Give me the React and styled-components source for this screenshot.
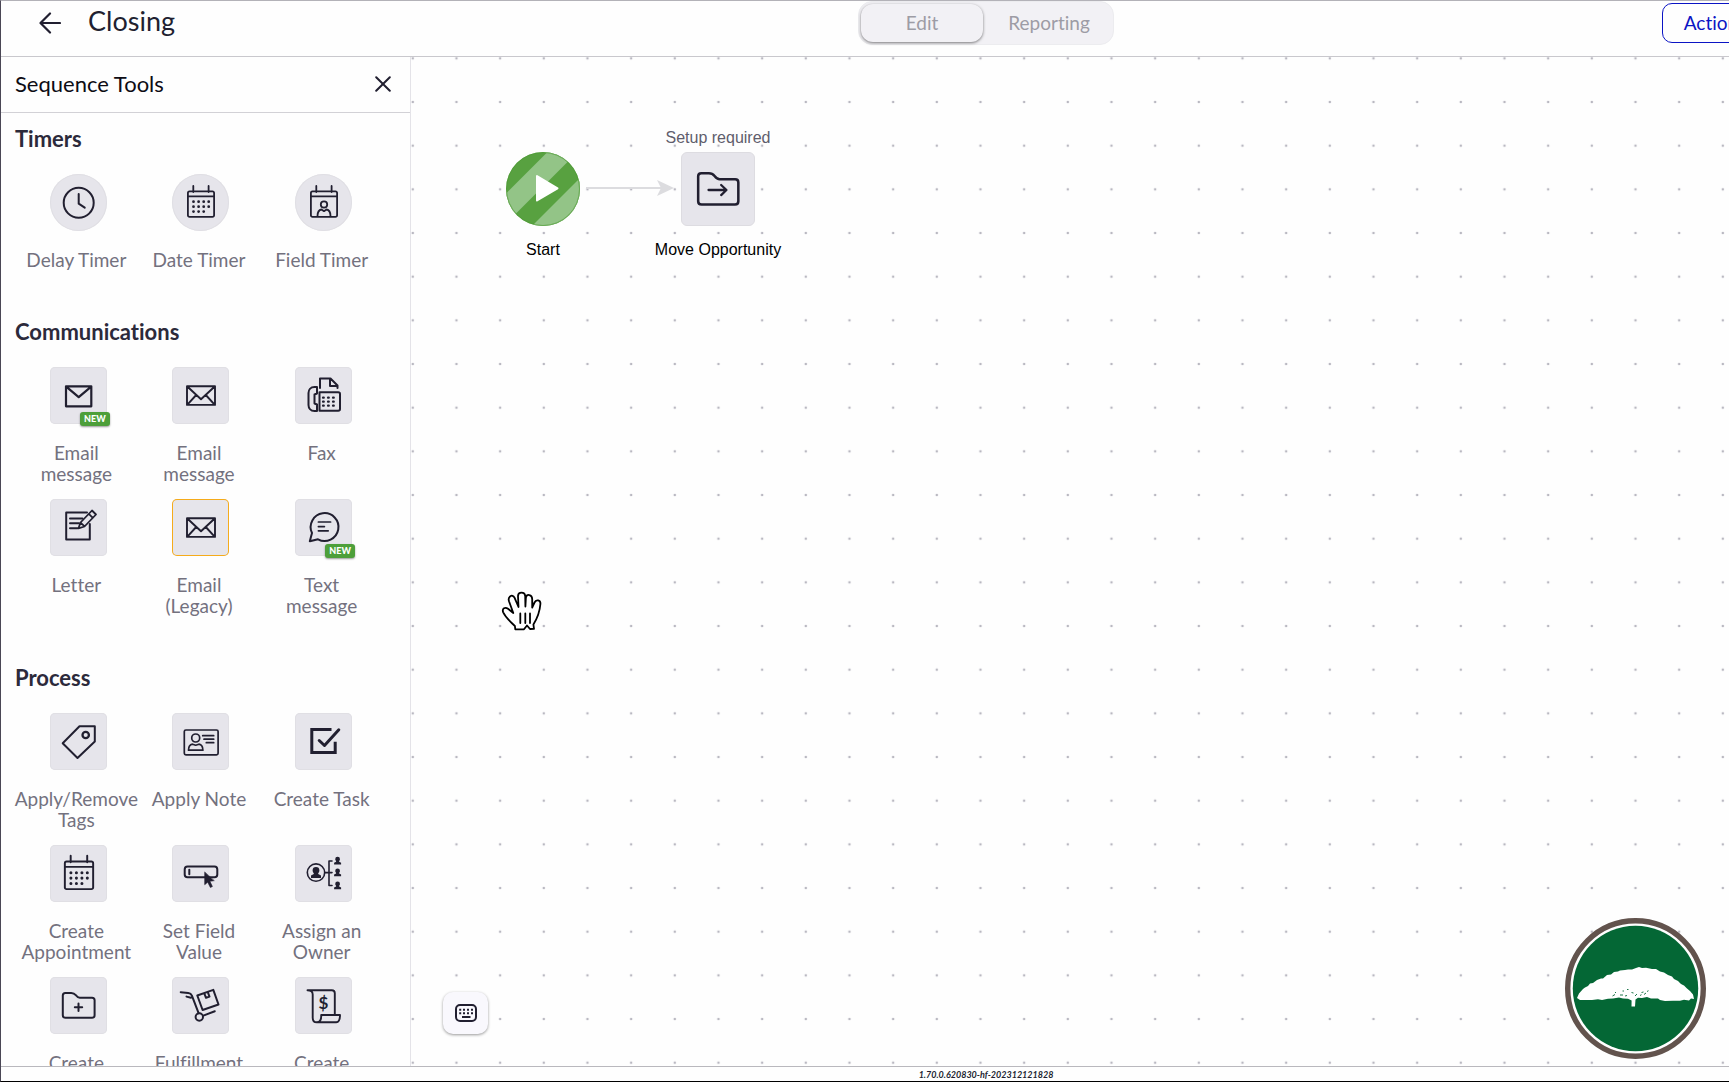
import React from "react";
import styled, { createGlobalStyle } from "styled-components";

const INK = "#211f30";

/* ---------- icons ---------- */

const Icon = ({ children, width = 2 }) => (
  <svg
    viewBox="0 0 57 57"
    width="100%"
    height="100%"
    fill="none"
    stroke={INK}
    strokeWidth={width}
    strokeLinecap="round"
    strokeLinejoin="round"
    aria-hidden="true"
  >
    {children}
  </svg>
);

const ClockIcon = () => (
  <Icon>
    <circle cx="28.7" cy="28.8" r="15" />
    <path d="M28.7 20v9.7l6 4" />
  </Icon>
);

const CalendarFrame = () => (
  <path d="M17.5 17.3h23a1.6 1.6 0 0 1 1.6 1.6v22.4a1.6 1.6 0 0 1-1.6 1.6h-23a1.6 1.6 0 0 1-1.6-1.6V18.9a1.6 1.6 0 0 1 1.6-1.6zM16 22.3h26M21.3 12v6M36.6 12v6" />
);

const CalendarIcon = ({ scale = 1 }) => (
  <Icon width={1.8}>
    <g transform={`translate(29 27.5) scale(${scale}) translate(-29 -27.5)`}>
      <CalendarFrame />
      <path
        strokeWidth="2.8"
        d="M21.5 27.7h.01M26.6 27.7h.01M31.7 27.7h.01M36.7 27.7h.01M21.5 32.7h.01M26.6 32.7h.01M31.7 32.7h.01M36.7 32.7h.01M21.5 37.6h.01M26.6 37.6h.01M31.7 37.6h.01"
      />
    </g>
  </Icon>
);

const FieldTimerIcon = () => (
  <Icon width={1.8}>
    <CalendarFrame />
    <circle cx="29" cy="30.5" r="3.2" />
    <path d="M22.5 42c0-3.6 1.6-6 4-6.5l2.5 1.7 2.5-1.7c2.4.5 4 2.9 4 6.5" />
  </Icon>
);

const MailIcon = () => (
  <Icon width={2.2}>
    <path d="M16 19.3h25.3v20H16zM16.5 19.8l12.2 10.4 12.2-10.4" />
  </Icon>
);

const EnvelopeIcon = () => (
  <Icon width={1.9}>
    <path d="M15 19.3h28v18.6H15zM15.3 19.5L29 32.3l13.7-12.8M15.4 37.6l8.8-9.6M42.6 37.6l-8.8-9.6" />
  </Icon>
);

const FaxIcon = () => (
  <Icon width={2}>
    <path d="M22 20h-2.5c-4 0-6 3-6 6v12c0 3 2 6 6 6H22v-6.5l-2.5-1v-9l2.5-1zM25 21V11.5h10.5l7 7V21M35 12v7h7M24.5 43.8V25.3h18.8c1 0 1.7.7 1.7 1.7v15c0 1-.8 1.8-1.8 1.8z" />
    <path
      strokeWidth="2.2"
      d="M28 30.7h.8M33 30.7h.8M38 30.7h.8M28 34.7h.8M33 34.7h.8M38 34.7h.8M28 38.7h.8M33 38.7h.8M38 38.7h.8"
    />
  </Icon>
);

const LetterIcon = () => (
  <Icon>
    <path d="M37 13.6H16.2v26.8h23.6V25" />
    <path d="M20 19.6h12.5M20 24.3h9M20 29.3h7.5" />
    <path strokeWidth="1.8" d="M28.5 29.3l2-5.8 11.5-12 4 4-11.5 12zM38.8 14.8l4 4M30.8 23.8l3.5 3.4" />
  </Icon>
);

const ChatIcon = () => (
  <Icon>
    <path d="M14.8 42.3l2.2-8.3a13.9 13.9 0 1 1 6 6.3z" />
    <path strokeWidth="1.7" d="M23.4 23h12.2M23.4 27.6h6M23.4 31.8h9.8" />
  </Icon>
);

const TagIcon = () => (
  <Icon>
    <path d="M29.5 13.3h15.3v15.3L27.5 45 12.7 30.3z" />
    <circle cx="35.7" cy="22" r="3.2" strokeWidth="2.3" />
  </Icon>
);

const NoteIcon = () => (
  <Icon width={1.7}>
    <rect x="12.3" y="17" width="33.8" height="24.8" rx="1.6" />
    <circle cx="23.7" cy="25" r="4" />
    <path d="M16.5 37.2c0-3.4 1.5-5.5 4-6l3.2 1 3.2-1c2.5.5 4 2.6 4 6zM30.7 22.7h11M32 26.2h9.7M34.3 29.7h7.4" />
  </Icon>
);

const TaskIcon = () => (
  <Icon width={3}>
    <path strokeLinejoin="miter" strokeLinecap="butt" d="M36.5 16.5H16.8v23h23.4V28.7" />
    <path d="M24.2 27.5l5.3 5 14.3-15.7" />
  </Icon>
);

const SetFieldIcon = () => (
  <Icon>
    <rect x="12.7" y="21.6" width="32.6" height="10.6" rx="2.8" />
    <path d="M17.3 24.7v4.6" />
    <path fill={INK} strokeWidth=".6" d="M32.7 27.3v12.4l3-2.5 2.7 5.3 2-1-2.5-5.2 4-.6z" />
  </Icon>
);

const Bust = ({ x, y, s }) => (
  <path
    transform={`translate(${x} ${y}) scale(${s})`}
    fill={INK}
    stroke="none"
    d="M0-5.5a3.4 3.4 0 0 1 3.4 3.4c0 1.2-.6 2-1.2 2.7v.9L5 3v2.5H-5V3l2.8-1.5V.6c-.6-.7-1.2-1.5-1.2-2.7A3.4 3.4 0 0 1 0-5.5z"
  />
);

const AssignIcon = () => (
  <Icon width={1.6}>
    <circle cx="21" cy="27.6" r="8.7" />
    <Bust x={21} y={27.6} s={1} />
    <path d="M29.7 27.6h7.3M37 16h-3v24.5h3" />
    <Bust x={42.6} y={15.6} s={0.7} />
    <Bust x={42.6} y={27.4} s={0.7} />
    <Bust x={42.6} y={40.4} s={0.7} />
  </Icon>
);

const FolderShape = () => (
  <path d="M12.8 18.5c0-1.5 1-2.5 2.5-2.5h6c2.6 0 3.3.7 4.5 2.2 1.3 1.7 2 2.6 4 2.6h12.3c1.5 0 2.5 1 2.5 2.5v14.9c0 1.7-.9 2.6-2.6 2.6H15.5c-1.8 0-2.7-.9-2.7-2.6z" />
);

const FolderPlusIcon = () => (
  <Icon>
    <FolderShape />
    <path d="M28.5 26.6v7.4M24.8 30.3h7.4" />
  </Icon>
);

const FolderArrowIcon = () => (
  <Icon>
    <FolderShape />
    <path strokeWidth="1.8" d="M21 29.3h14M31 25.3l4.2 4-4.2 4" />
  </Icon>
);

const DollyIcon = () => (
  <Icon>
    <path d="M8.7 15.2l7.5.8c1.8.2 3 .9 3.7 2.6l6.7 17.5M14.5 19.6l4.5 1.2M31.3 38.6l11.5-4.4" />
    <circle cx="27.3" cy="40" r="3.7" />
    <path d="M25.3 18.5l16-5.6 5.2 14.6-15.9 5.5zM32.3 16.3l1.7 4.5 3.5-1.2-1.7-4.5" />
  </Icon>
);

const OrderIcon = () => (
  <Icon width={1.9}>
    <path d="M12.5 13.3h24.3c2 0 3 1.1 3 3v21.5M12.5 13.3c3.7 0 5.2 1.2 5.2 4.2v23.2c0 3 1.5 4.6 4 4.6h19.6c2.2 0 3.7-2.5 3.7-7.3H26.2c.2 4.2-1 7.3-4.3 7.3" />
    <text
      x="28.5"
      y="31.5"
      textAnchor="middle"
      fontFamily="Lato, sans-serif"
      fontSize="17"
      fontWeight="700"
      fill={INK}
      stroke="none"
    >
      $
    </text>
  </Icon>
);

const BackIcon = () => (
  <svg width="22" height="22" viewBox="0 0 22 22" fill="none" stroke={INK} strokeWidth="2.2" aria-hidden="true">
    <path strokeLinecap="round" strokeLinejoin="round" d="M11 1.5L1.5 11l9.5 9.5M2 11h19" />
  </svg>
);

const CloseIcon = () => (
  <svg width="16" height="16" viewBox="0 0 16 16" fill="none" stroke={INK} strokeWidth="2" aria-hidden="true">
    <path strokeLinecap="round" d="M1.2 1.2l13.6 13.6M14.8 1.2L1.2 14.8" />
  </svg>
);

const KeyboardIcon = () => (
  <svg width="22" height="18" viewBox="0 0 22 18" fill="none" stroke={INK} strokeWidth="2" aria-hidden="true">
    <rect x="1" y="1" width="20" height="16" rx="4" />
    <path d="M4.2 5.7h2M8 5.7h2M12 5.7h2M16 5.7h2M4.2 9.2h2M8 9.2h2M12 9.2h2M16 9.2h2M7 13h8.5" />
  </svg>
);

const StartIcon = () => (
  <svg width="74" height="74" viewBox="0 0 74 74" aria-hidden="true">
    <clipPath id="startDisc">
      <circle cx="37" cy="37" r="37" />
    </clipPath>
    <g clipPath="url(#startDisc)">
      <path fill="#58a140" d="M0 0h74v74H0z" />
      <path fill="#93c487" d="M41.5 0H71.5L0 71.5V41.5zM100 0V74H26L100 0z" />
    </g>
    <circle cx="37" cy="37" r="36.5" fill="none" stroke="#4c9a33" strokeOpacity=".6" />
    <path
      fill="#fff"
      stroke="#fff"
      strokeWidth="2"
      strokeLinejoin="round"
      d="M31 24l20.5 12.3L31 48.5z"
    />
  </svg>
);

const HandIcon = () => (
  <svg
    width="43"
    height="40"
    viewBox="0 0 43 40"
    fill="#fff"
    stroke="#000"
    strokeWidth="1.8"
    strokeLinejoin="round"
    strokeLinecap="round"
    aria-hidden="true"
  >
    <path d="M15.3 38.3l-.4-3.3C10.5 31 5.8 26.5 3.2 21.3 1.7 17.5 5.2 15.6 8 17.8l5.3 4.2L9 10.3C7.5 5.5 12.3 2.6 14.5 6.6l4 9.4-.5-11c.2-4.4 6.8-4.4 7.2 0l.2 10.5.5-9c.8-3.8 6.2-3.3 6.3 1.5v8.5l2.3-5c1.6-3.6 6.3-2.5 5.9 1.5-.6 7.5-2.6 13.5-7 20.5l.6 4.3-4 .2-3-3.5-3 3.8z" />
    <path d="M20.3 22.5v9.5M25.3 22.5v9.5M30 22.5v9.5" />
  </svg>
);

const TreeLogo = () => (
  <svg width="141" height="141" viewBox="0 0 141 141" role="img" aria-label="Tree">
    <circle cx="70.5" cy="70.5" r="67.8" fill="#fff" stroke="#62534d" strokeWidth="5.4" />
    <circle cx="70.5" cy="70.5" r="62.7" fill="#046735" />
    <path
      fill="#fff"
      d="M12 80L14 75.5 18 71 20 69.5 23 68 25 65.5 28 65 32 62 36 60.5 38 60.5 42 57 46 56.5 49 54 53 53.5 55 52.5 60 52 63 51.5 67 51.5 71 50 74 49 77 50 81 49.8 87 51 91 51 95 53.5 99 54.5 103 57 107 58.5 109 61 113 63 116 66 119 67.5 122 70.5 125 73 128 76.5 129 81 126 80.5 124 82.5 119 81.8 115 82.8 108 82.8 100 83 95 82 93 80.5 86 80.5 82 79 77 80 73 79.8 70.5 81.5 70 88.5 66.5 88.5 66.6 82.5 63 80.8 58 80.5 54 79.5 48 80.5 43 80.8 37 82 33 81.2 27 82 20 82 15 82z"
    />
    <path
      fill="none"
      stroke="#046735"
      strokeWidth=".9"
      d="M47.5 78l2.5-1.5M50 74l1 1M55 77h3M57.5 73h1.5M60 78l2-.5M62 71.5h1.5M66.5 74.5l2 .5M70 78l2-2M75 77.5l1.5-.8M76.5 74.5l2-.5M79 76.5l2-1.5M82 73.5l1.5-.8"
    />
  </svg>
);

/* ---------- data ---------- */

const sections = [
  {
    title: "Timers",
    tools: [
      { label: "Delay Timer", icon: <ClockIcon />, round: true },
      { label: "Date Timer", icon: <CalendarIcon />, round: true },
      { label: "Field Timer", icon: <FieldTimerIcon />, round: true },
    ],
  },
  {
    title: "Communications",
    tools: [
      { label: "Email\nmessage", icon: <MailIcon />, isNew: true },
      { label: "Email\nmessage", icon: <EnvelopeIcon /> },
      { label: "Fax", icon: <FaxIcon /> },
      { label: "Letter", icon: <LetterIcon /> },
      { label: "Email\n(Legacy)", icon: <EnvelopeIcon />, outlined: true },
      { label: "Text\nmessage", icon: <ChatIcon />, isNew: true },
    ],
  },
  {
    title: "Process",
    tools: [
      { label: "Apply/Remove\nTags", icon: <TagIcon /> },
      { label: "Apply Note", icon: <NoteIcon /> },
      { label: "Create Task", icon: <TaskIcon /> },
      { label: "Create\nAppointment", icon: <CalendarIcon scale={1.08} /> },
      { label: "Set Field\nValue", icon: <SetFieldIcon /> },
      { label: "Assign an\nOwner", icon: <AssignIcon /> },
      { label: "Create", icon: <FolderPlusIcon /> },
      { label: "Fulfillment", icon: <DollyIcon /> },
      { label: "Create", icon: <OrderIcon /> },
    ],
  },
];

const GRID = 40;
const ZOOM = 1.0917;

/* ---------- components ---------- */

const Tool = ({ label, icon, round, outlined, isNew }) => (
  <ToolButton type="button">
    <Tile $round={round} $outlined={outlined}>
      {icon}
      {isNew && <Badge>NEW</Badge>}
    </Tile>
    <ToolLabel>{label}</ToolLabel>
  </ToolButton>
);

const Canvas = () => (
  <CanvasArea>
    <Dots aria-hidden="true">
      <pattern id="dots" x="-20" y="-20.5" width={GRID * ZOOM} height={GRID * ZOOM} patternUnits="userSpaceOnUse">
        <circle cx="21.8" cy="21.8" r="1.3" fill="#b9b8c1" />
      </pattern>
      <rect width="100%" height="100%" fill="url(#dots)" />
    </Dots>
    <Connector width="88" height="18" viewBox="0 0 88 18" aria-hidden="true">
      <path d="M0 9h76" stroke="#dcdcdf" strokeWidth="2" />
      <path d="M71 1l17 8-17 8 4-8z" fill="#dcdcdf" />
    </Connector>
    <Node $x={52} $y={70}>
      <Hint />
      <StartIcon />
      <NodeLabel>Start</NodeLabel>
    </Node>
    <Node $x={227} $y={70}>
      <Hint>Setup required</Hint>
      <NodeTile>
        <FolderArrowIcon />
      </NodeTile>
      <NodeLabel>Move Opportunity</NodeLabel>
    </Node>
    <Hand>
      <HandIcon />
    </Hand>
    <ShortcutsButton type="button" aria-label="Keyboard shortcuts">
      <KeyboardIcon />
    </ShortcutsButton>
  </CanvasArea>
);

const App = () => (
  <Viewport>
    <GlobalStyle />
    <Shell>
      <Header>
        <HeaderLeft>
          <IconButton type="button" aria-label="Back">
            <BackIcon />
          </IconButton>
          <Title>Closing</Title>
        </HeaderLeft>
        <Toggle>
          <ToggleButton type="button" $active>
            Edit
          </ToggleButton>
          <ToggleButton type="button">Reporting</ToggleButton>
        </Toggle>
        <HeaderRight>
          <ActionsButton type="button">Actions</ActionsButton>
        </HeaderRight>
      </Header>
      <Body>
        <Sidebar>
          <SidebarHeader>
            <SidebarTitle>Sequence Tools</SidebarTitle>
            <IconButton type="button" aria-label="Close">
              <CloseIcon />
            </IconButton>
          </SidebarHeader>
          <ToolList>
            {sections.map((section) => (
              <section key={section.title}>
                <SectionTitle>{section.title}</SectionTitle>
                <ToolGrid>
                  {section.tools.map((tool, i) => (
                    <Tool key={i} {...tool} />
                  ))}
                </ToolGrid>
              </section>
            ))}
          </ToolList>
        </Sidebar>
        <Canvas />
      </Body>
      <Footer>1.70.0.620830-hf-202312121828</Footer>
    </Shell>
    <Logo>
      <TreeLogo />
    </Logo>
  </Viewport>
);

/* ---------- styles ---------- */

const GlobalStyle = createGlobalStyle`
  * {
    box-sizing: border-box;
  }
  body {
    margin: 0;
    background: #fefefe;
    color: ${INK};
    font-family: Lato, "Open Sans", sans-serif;
    font-variant-ligatures: none;
  }
  button {
    margin: 0;
    padding: 0;
    border: 0;
    background: none;
    color: inherit;
    font: inherit;
    cursor: pointer;
  }
  svg {
    display: block;
  }
`;

const Viewport = styled.div`
  height: 100vh;
  overflow: hidden;
`;

/* the editor is wider than the window and runs off its right edge */
const Shell = styled.div`
  width: 114%;
  height: 100%;
  display: flex;
  flex-direction: column;
  border-top: 1px solid #b3b2b8;
  border-left: 1px solid #4a4755;
  border-bottom: 1px solid #000;
`;

const Header = styled.header`
  display: grid;
  grid-template-columns: 1fr auto 1fr;
  height: 56px;
  border-bottom: 1px solid #c9c8cd;
`;

const HeaderLeft = styled.div`
  display: flex;
  align-items: center;
  gap: 27px;
  height: 44px;
  padding-left: 38px;
`;

const IconButton = styled.button`
  display: flex;
`;

const Title = styled.h1`
  margin: 0;
  padding-bottom: 5px;
  font-size: 27px;
  font-weight: 400;
  line-height: 36px;
`;

const Toggle = styled.div`
  display: flex;
  gap: 4px;
  align-self: start;
  height: 44px;
  padding: 2px;
  border: 1px solid #ececef;
  border-radius: 14px;
  background: #f2f1f5;
`;

const ToggleButton = styled.button`
  width: ${(p) => (p.$active ? 122 : 124)}px;
  padding-bottom: 2px;
  border-radius: 12px;
  color: #9d9ca5;
  font-size: 19px;
  box-shadow: ${(p) => (p.$active ? "0 1px 3px rgba(0, 0, 0, 0.5)" : "none")};
`;

const HeaderRight = styled.div`
  display: flex;
  justify-content: flex-end;
  padding: 2px 203px 0 0;
`;

const ActionsButton = styled.button`
  width: 106px;
  height: 40px;
  padding-bottom: 2px;
  border: 1px solid #0b14c4;
  border-radius: 10px;
  color: #0b14c4;
  font-size: 19px;
`;

const Body = styled.div`
  display: flex;
  flex: 1;
  min-height: 0;
`;

const Sidebar = styled.aside`
  display: flex;
  flex-direction: column;
  flex: none;
  width: 410px;
  border-right: 1px solid #e4e3e8;
`;

const SidebarHeader = styled.div`
  display: flex;
  align-items: center;
  justify-content: space-between;
  flex: none;
  height: 56px;
  padding: 0 19px 2px 14px;
  border-bottom: 1px solid #d2d1d6;
`;

const SidebarTitle = styled.h2`
  margin: 0;
  color: #0d0c14;
  font-size: 22px;
  font-weight: 400;
  line-height: 26px;
`;

const ToolList = styled.div`
  flex: 1;
  min-height: 0;
  padding: 13px 27px 0 14px;
  overflow-y: auto;
  scrollbar-width: none;
`;

const SectionTitle = styled.h3`
  margin: 0 0 22px;
  color: #2c2a3b;
  font-size: 22px;
  font-weight: 700;
  line-height: 26px;
`;

const ToolGrid = styled.div`
  display: grid;
  grid-template-columns: repeat(3, minmax(0, 1fr));
  row-gap: 15px;
  margin-bottom: 49px;
`;

const ToolButton = styled.button`
  display: flex;
  flex-direction: column;
  align-items: center;
  gap: 18px;
`;

const Tile = styled.span`
  position: relative;
  width: 57px;
  height: 57px;
  margin-left: 4px;
  border-radius: ${(p) => (p.$round ? "50%" : "5px")};
  background: #e6e5eb;
  box-shadow: inset 0 0 0 1px ${(p) => (p.$outlined ? "#f5ab1b" : "#e0dfe4")};
`;

const Badge = styled.span`
  position: absolute;
  right: -3px;
  bottom: -2px;
  width: 30px;
  height: 14px;
  border-radius: 3px;
  background: #4d9f3a;
  box-shadow: 0 1px 2px rgba(0, 0, 0, 0.4);
  color: #fff;
  font-size: 9px;
  font-weight: 900;
  line-height: 14px;
  text-align: center;
`;

const ToolLabel = styled.span`
  color: #73717e;
  font-size: 19px;
  line-height: 21px;
  text-align: center;
  white-space: pre;
`;

const CanvasArea = styled.main`
  position: relative;
  flex: 1;
  overflow: hidden;
  font-family: "Liberation Sans", Arial, sans-serif;
`;

const Dots = styled.svg`
  width: 100%;
  height: 100%;
`;

const Connector = styled.svg`
  position: absolute;
  left: 175px;
  top: 122px;
`;

const Node = styled.div`
  position: absolute;
  left: ${(p) => p.$x}px;
  top: ${(p) => p.$y}px;
  display: flex;
  flex-direction: column;
  align-items: center;
  width: 160px;
`;

const Hint = styled.span`
  height: 25px;
  color: #5f5d6c;
  font-size: 16px;
  line-height: 21px;
`;

const NodeTile = styled.div`
  width: 74px;
  height: 74px;
  border: 1px solid #dddce1;
  border-radius: 6px;
  background: #e6e5eb;
`;

const NodeLabel = styled.span`
  margin-top: 13px;
  color: #000;
  font-size: 16px;
  line-height: 21px;
`;

const Hand = styled.div`
  position: absolute;
  left: 89px;
  top: 534px;
`;

const ShortcutsButton = styled.button`
  position: absolute;
  left: 32px;
  bottom: 32px;
  display: flex;
  align-items: center;
  justify-content: center;
  width: 45px;
  height: 42px;
  border-radius: 10px;
  background: #f9f8fd;
  box-shadow: 0 1px 3px rgba(0, 0, 0, 0.4);
`;

const Footer = styled.footer`
  flex: none;
  height: 15px;
  border-top: 1px solid #b9b8bd;
  font-size: 9px;
  font-style: italic;
  font-weight: 700;
  line-height: 16px;
  text-align: center;
`;

const Logo = styled.div`
  position: fixed;
  right: 23px;
  bottom: 23px;
`;

export default App;
